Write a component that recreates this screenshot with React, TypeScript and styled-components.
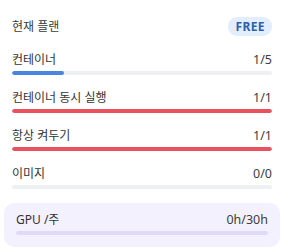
import React from 'react';
import styled, { createGlobalStyle } from 'styled-components';

const GlobalStyle = createGlobalStyle`
  body {
    margin: 0;
    background: #ffffff;
    font-family: 'Noto Sans', 'Noto Sans CJK KR', sans-serif;
  }
`;

const Panel = styled.div`
  width: 276px;
  margin: 0 4px;
  padding-top: 16px;
  display: flex;
  flex-direction: column;
`;

const Header = styled.div`
  display: flex;
  align-items: center;
  justify-content: space-between;
  height: 20px;
  padding: 0 8px;
  margin-bottom: 15px;
`;

const PlanTitle = styled.div`
  font-size: 12px;
  color: #3a3a3a;
`;

const Badge = styled.div`
  font-size: 12px;
  font-weight: 700;
  letter-spacing: 0.4px;
  color: #2b5fb0;
  background: #e3eefc;
  border-radius: 9px;
  padding: 1px 7px;
  line-height: 17px;
`;

const List = styled.div`
  display: flex;
  flex-direction: column;
  gap: 14px;
  padding: 0 8px;
`;

const Row = styled.div`
  display: flex;
  flex-direction: column;
`;

const RowHead = styled.div`
  display: flex;
  justify-content: space-between;
  align-items: center;
  height: 16px;
  margin-bottom: 4px;
  font-size: 12px;
  color: #333;
`;

const Value = styled.span`
  font-size: 12.5px;
  color: #3d3d3d;
`;

const Track = styled.div<{ $tone?: 'gray' | 'violet' }>`
  height: 4px;
  border-radius: 2px;
  background: ${(p) => (p.$tone === 'violet' ? '#e0d9f8' : '#eef0f2')};
  overflow: hidden;
`;

const Fill = styled.div<{ $color: string }>`
  height: 100%;
  border-radius: 2px;
  background: ${(p) => p.$color};
`;

const GpuBox = styled.div`
  margin-top: 14px;
  background: #f4f1fe;
  border-radius: 10px;
  padding: 8px 12px 12px;
`;

const usage = [
  { label: '컨테이너', used: 1, total: 5 },
  { label: '컨테이너 동시 실행', used: 1, total: 1 },
  { label: '항상 켜두기', used: 1, total: 1 },
  { label: '이미지', used: 0, total: 0 },
];

function barColor(used: number, total: number) {
  if (total > 0 && used >= total) return '#e9515f';
  return '#4a86e0';
}

export default function App() {
  return (
    <>
      <GlobalStyle />
      <Panel>
        <Header>
          <PlanTitle>현재 플랜</PlanTitle>
          <Badge>FREE</Badge>
        </Header>
        <List>
          {usage.map((u) => {
            const pct = u.total > 0 ? (u.used / u.total) * 100 : 0;
            return (
              <Row key={u.label}>
                <RowHead>
                  <span>{u.label}</span>
                  <Value>
                    {u.used}/{u.total}
                  </Value>
                </RowHead>
                <Track>
                  <Fill $color={barColor(u.used, u.total)} style={{ width: `${pct}%` }} />
                </Track>
              </Row>
            );
          })}
        </List>
        <GpuBox>
          <Row>
            <RowHead>
              <span>GPU /주</span>
              <Value>0h/30h</Value>
            </RowHead>
            <Track $tone="violet">
              <Fill $color="#8b6fe0" style={{ width: '0%' }} />
            </Track>
          </Row>
        </GpuBox>
      </Panel>
    </>
  );
}
